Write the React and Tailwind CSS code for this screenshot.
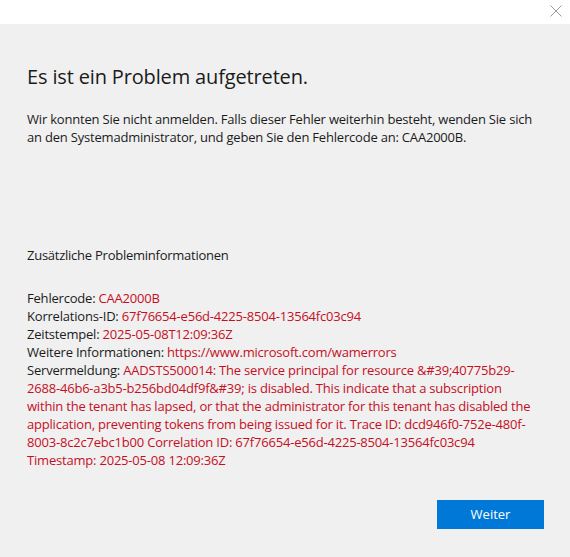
export default function App() {
  const red = "text-[#c50f1f]";
  return (
    <div className="w-[570px] h-[557px] bg-[#f0f0f0] flex flex-col text-[#1b1b1b]" style={{ fontFamily: '"Open Sans", "Noto Sans", sans-serif' }}>
      <div className="h-[24px] bg-white flex justify-end items-start shrink-0">
        <svg width="12" height="12" viewBox="0 0 12 12" className="mt-[5px] mr-[8px]">
          <path d="M0.5 0.5 L11.5 11.5 M11.5 0.5 L0.5 11.5" stroke="#9a9a9a" strokeWidth="1" />
        </svg>
      </div>
      <div className="flex flex-col px-[27px] flex-1">
        <h1 className="text-[20px] leading-[26px] mt-[40px] tracking-[-0.15px] text-[#1b1b1b]">Es ist ein Problem aufgetreten.</h1>
        <p className="text-[13px] leading-[18px] mt-[20px] tracking-[-0.2px] whitespace-nowrap">
          Wir konnten Sie nicht anmelden. Falls dieser Fehler weiterhin besteht, wenden Sie sich
          <br />
          an den Systemadministrator, und geben Sie den Fehlercode an: CAA2000B.
        </p>
        <p className="text-[13px] leading-[18px] mt-[100px] tracking-[-0.25px]">Zusätzliche Probleminformationen</p>
        <div className="text-[13px] leading-[18px] mt-[25px] tracking-[-0.2px] whitespace-nowrap">
          <div>Fehlercode: <span className={red}>CAA2000B</span></div>
          <div>Korrelations-ID: <span className={red}>67f76654-e56d-4225-8504-13564fc03c94</span></div>
          <div>Zeitstempel: <span className={red}>2025-05-08T12:09:36Z</span></div>
          <div>Weitere Informationen: <span className={red}>https://www.microsoft.com/wamerrors</span></div>
          <div>
            Servermeldung: <span className={red}>AADSTS500014: The service principal for resource &amp;#39;40775b29-</span>
            <br />
            <span className={red}>2688-46b6-a3b5-b256bd04df9f&amp;#39; is disabled. This indicate that a subscription</span>
            <br />
            <span className={red}>within the tenant has lapsed, or that the administrator for this tenant has disabled the</span>
            <br />
            <span className={red}>application, preventing tokens from being issued for it. Trace ID: dcd946f0-752e-480f-</span>
            <br />
            <span className={red}>8003-8c2c7ebc1b00 Correlation ID: 67f76654-e56d-4225-8504-13564fc03c94</span>
            <br />
            <span className={red}>Timestamp: 2025-05-08 12:09:36Z</span>
          </div>
        </div>
        <div className="flex justify-end mt-auto mb-[28px] mr-[-1px]">
          <button className="w-[107px] h-[29px] bg-[#0078d7] text-white text-[13px]">Weiter</button>
        </div>
      </div>
    </div>
  );
}
